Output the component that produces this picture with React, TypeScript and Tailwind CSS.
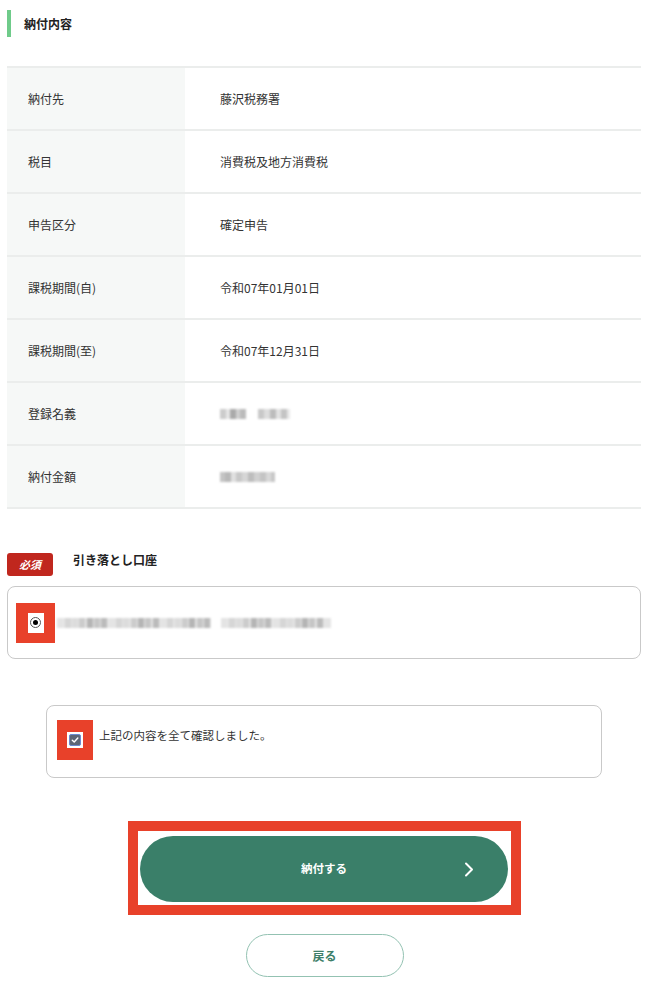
import React from "react";

const font = { fontFamily: '"Noto Sans CJK JP", "Noto Sans", sans-serif' };

function Blur({ segs }: { segs: [number, string][] }) {
  return (
    <div className="flex items-center h-[12px] blur-[1px]">
      {segs.map(([w, c], i) => (
        <span key={i} className="h-[10px] inline-block" style={{ width: w, background: c }} />
      ))}
    </div>
  );
}

const rows: { label: string; value?: string; blur?: [number, string][] }[] = [
  { label: "納付先", value: "藤沢税務署" },
  { label: "税目", value: "消費税及地方消費税" },
  { label: "申告区分", value: "確定申告" },
  { label: "課税期間(自)", value: "令和07年01月01日" },
  { label: "課税期間(至)", value: "令和07年12月31日" },
  {
    label: "登録名義",
    blur: [
      [6, "#ccc"], [4, "#e6e6e6"], [6, "#aaa"], [4, "#d0d0d0"], [6, "#bbb"], [12, "#fff"], [6, "#c8c8c8"], [6, "#ddd"], [6, "#bcbcbc"], [5, "#e2e2e2"], [6, "#c4c4c4"], [3, "#e8e8e8"],
    ],
  },
  {
    label: "納付金額",
    blur: [
      [5, "#c4c4c4"], [6, "#b8b8b8"], [5, "#e0e0e0"], [6, "#c8c8c8"], [6, "#d6d6d6"], [6, "#bdbdbd"], [6, "#d0d0d0"], [6, "#c4c4c4"], [5, "#d8d8d8"], [4, "#c8c8c8"],
    ],
  },
];

export default function App() {
  const accountSegs: [number, string][] = [];
  const palette = ["#c6c6c6", "#d6d6d6", "#b5b5b5", "#e4e4e4", "#cccccc", "#bbbbbb", "#dcdcdc"];
  for (let i = 0; i < 36; i++) {
    if (i === 21) accountSegs.push([10, "#fff"]);
    accountSegs.push([6, palette[(i * 5 + 3) % palette.length]]);
    accountSegs.push([i % 3 === 0 ? 2 : 1, "#e6e6e6"]);
  }
  return (
    <div className="w-[648px] min-h-[1000px] bg-white text-[#333]" style={font}>
      <div className="px-[7px]">
        <div className="flex items-center h-[27px] mt-[10px] border-l-4 border-[#6fcb8a] pl-[13px]">
          <span className="text-[12px] font-bold text-[#222]">納付内容</span>
        </div>

        <div className="mt-[29px] border-t-2 border-[#ebedec]">
          {rows.map((r) => (
            <div key={r.label} className="flex h-[63px] border-b-2 border-[#ebedec]">
              <div className="w-[178px] bg-[#f6f8f7] flex items-center pl-[21px] text-[12px]">{r.label}</div>
              <div className="flex-1 flex items-center pl-[35px] text-[12px]">
                {r.value ? r.value : <Blur segs={r.blur!} />}
              </div>
            </div>
          ))}
        </div>

        <div className="mt-[44px] flex items-center">
          <div className="w-[46px] h-[23px] bg-[#c0271e] rounded-[3px] flex items-center justify-center text-white text-[11px] font-bold italic">必須</div>
          <span className="ml-[20px] -mt-[9px] text-[12px] font-bold text-[#222]">引き落とし口座</span>
        </div>

        <div className="mt-[10px] h-[73px] border border-[#c9c9c9] rounded-[8px] flex items-center pl-[8px]">
          <div className="w-[39px] h-[40px] bg-[#e8412a] flex items-center justify-center">
            <div className="w-[16px] h-[20px] bg-white flex items-center justify-center">
              <div className="w-[11px] h-[11px] rounded-full border border-[#555] bg-white flex items-center justify-center">
                <div className="w-[5px] h-[5px] rounded-full bg-black" />
              </div>
            </div>
          </div>
          <div className="ml-[2px]">
            <Blur segs={accountSegs} />
          </div>
        </div>

        <div className="mx-[39px] mt-[46px] h-[73px] border border-[#c9c9c9] rounded-[8px] flex items-start pl-[10px] pt-[14px]">
          <div className="w-[36px] h-[40px] bg-[#e8412a] flex items-center justify-center">
            <div className="w-[16px] h-[16px] bg-white flex items-center justify-center">
              <div className="w-[12px] h-[12px] rounded-[2px] bg-[#5d6676] border border-[#6b8ad0] flex items-center justify-center">
                <svg width="8" height="8" viewBox="0 0 8 8" fill="none">
                  <path d="M1.3 4.2 L3.2 6 L6.8 2" stroke="#fff" strokeWidth="1.4" strokeLinecap="round" strokeLinejoin="round" />
                </svg>
              </div>
            </div>
          </div>
          <span className="ml-[6px] mt-[8px] text-[11.5px] text-[#333] leading-[14px]">上記の内容を全て確認しました。</span>
        </div>

        <div className="flex justify-center mt-[43px]">
          <div className="w-[393px] h-[94px] border-[10px] border-[#e8412a] flex items-center justify-center">
            <div className="relative w-[368px] h-[66px] mt-[1px] rounded-full bg-[#3a7f69] flex items-center justify-center">
              <span className="text-white text-[11.5px] font-bold">納付する</span>
              <svg className="absolute right-[34px] top-[26px]" width="10" height="15" viewBox="0 0 10 15" fill="none">
                <path d="M2 1.5 L8 7.5 L2 13.5" stroke="#fff" strokeWidth="2" strokeLinecap="round" strokeLinejoin="round" />
              </svg>
            </div>
          </div>
        </div>

        <div className="flex justify-center mt-[19px] pl-[1px]">
          <div className="w-[158px] h-[43px] rounded-full border-[1.5px] border-[#93c2b2] flex items-center justify-center">
            <span className="text-[12px] font-bold text-[#3e7f6a]">戻る</span>
          </div>
        </div>
      </div>
    </div>
  );
}
